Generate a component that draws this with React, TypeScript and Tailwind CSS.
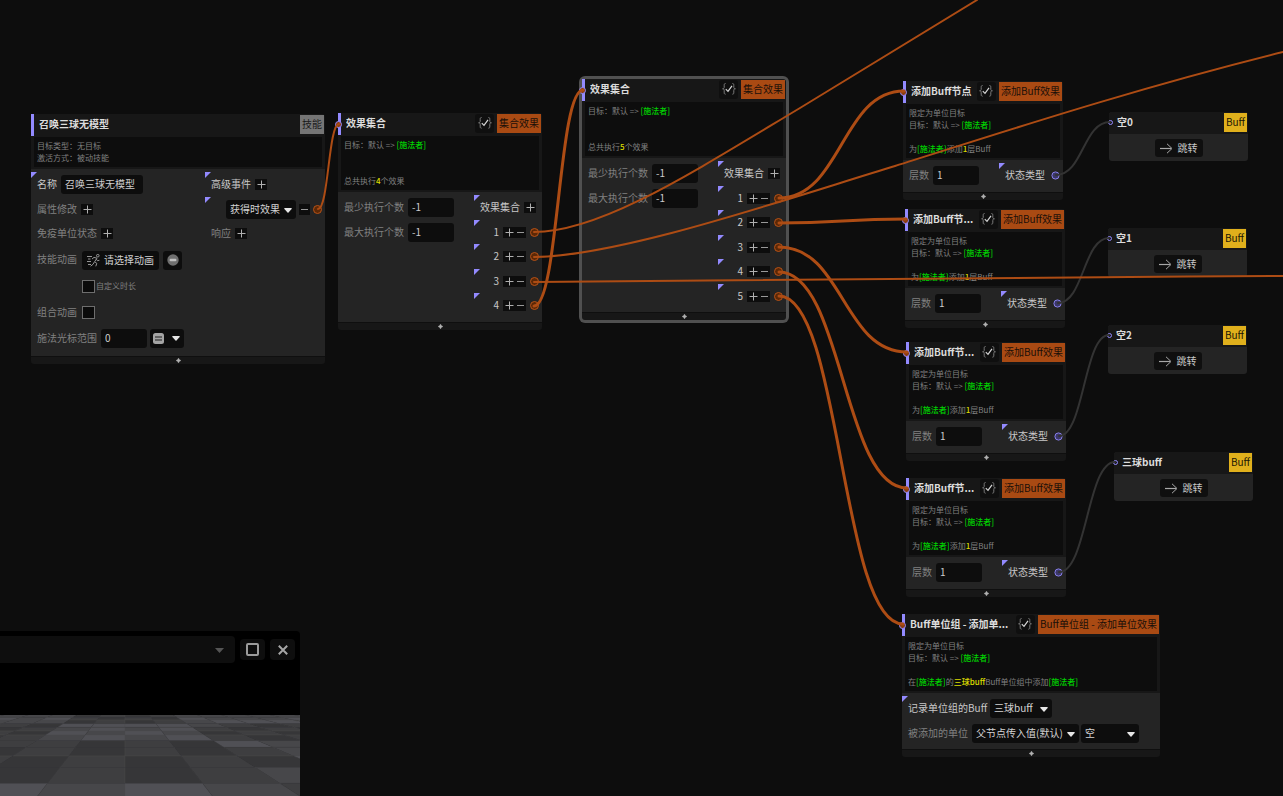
import type { ReactNode } from 'react'
import clsx from 'clsx'

/* ---------- icons ---------- */

function PlusGlyph() {
  return (
    <svg className="block" width="11" height="11" viewBox="0 0 11 11" stroke="#b0b0b0" fill="none">
      <path d="M1.5 5.5h8M5.5 1.5v8" />
    </svg>
  )
}

function MinusGlyph() {
  return (
    <svg className="block" width="11" height="11" viewBox="0 0 11 11" stroke="#989898" fill="none">
      <path d="M2 5.5h7" />
    </svg>
  )
}

function Caret({ className }: { className?: string }) {
  return (
    <svg className={className} width="8" height="5" viewBox="0 0 8 5">
      <path d="M.6 0h6.8q.6.3.2.9L4.5 4.6q-.5.5-1 0L.4.9Q0 .3.6 0z" fill="currentColor" />
    </svg>
  )
}

function BraceCheck() {
  return (
    <svg width="14" height="12" viewBox="0 0 14 12" fill="none">
      <g stroke="#7c7c7c">
        <path d="M3.6.5C2.2.5 2.2 1.2 2.2 2.4v1.9c0 .9-.5 1.5-1.6 1.5 1.1 0 1.6.6 1.6 1.5v1.9c0 1.2 0 2 1.4 2" />
        <path d="M10.4.5c1.4 0 1.4.7 1.4 1.9v1.9c0 .9.5 1.5 1.6 1.5-1.1 0-1.6.6-1.6 1.5v1.9c0 1.2 0 2-1.4 2" />
      </g>
      <path d="M3.8 6.2l2.2 2.2 4-5.6" stroke="#d8d8d8" strokeWidth="1.2" />
    </svg>
  )
}

function RunnerIcon() {
  return (
    <svg width="13" height="13" viewBox="0 0 13 13" fill="none" stroke="#949494">
      <path d="M0 2.5h5M1 5h2.5M0 7.5h4M1 10.5h3" />
      <circle cx="10.8" cy="1.7" r="1.3" />
      <path d="M5 5l2-1.6 3 .8-2.4 3.5 2.2 1.6-1 3M7.4 8L6 10.3l-2.4 1.9M9.4 5.2l1 1.5 2-.4" />
    </svg>
  )
}

/* ---------- small controls ---------- */

function Corner() {
  return (
    <svg className="absolute left-0 top-0" width="6" height="6" viewBox="0 0 6 6">
      <path d="M0 0h6L0 6z" fill="#938aff" />
    </svg>
  )
}

function Text({ children, bright }: { children: ReactNode; bright?: boolean }) {
  return <span className={clsx('pb-0.5', bright && 'text-[#c8c8c8]')}>{children}</span>
}

function Add() {
  return (
    <button aria-label="+" className="flex h-[11px] w-3 items-center justify-center bg-[#0d0d0d]">
      <PlusGlyph />
    </button>
  )
}

function Remove() {
  return (
    <button aria-label="-" className="flex h-[11px] w-[11px] items-center justify-center bg-[#0d0d0d]">
      <MinusGlyph />
    </button>
  )
}

function Field({ value, wide }: { value: string; wide?: boolean }) {
  return (
    <input
      defaultValue={value}
      className={clsx(
        'h-[19px] rounded-[3px] bg-[#0d0d0d] px-1 pb-0.5 text-[10px] text-[#cccccc] outline-none',
        wide ? 'w-[82px]' : 'w-[46px]',
      )}
    />
  )
}

function Picker({ value, label, className }: { value: string; label: string; className: string }) {
  return (
    <span className={clsx('relative block h-[19px] shrink-0', className)}>
      <select
        aria-label={label}
        className="block h-full w-full appearance-none rounded-[3px] bg-[#0d0d0d] pb-0.5 pl-1 text-[10px] text-[#d4d4d4] outline-none"
      >
        <option>{value}</option>
      </select>
      <Caret className="pointer-events-none absolute right-1 top-2 text-[#e6e6e6]" />
    </span>
  )
}

function Tick() {
  return (
    <input
      type="checkbox"
      className="h-[13px] w-[13px] shrink-0 appearance-none border border-[#6e6e6e] bg-[#0b0b0b] checked:bg-[#938aff]"
    />
  )
}

function Port({ kind }: { kind: 'flow' | 'type' }) {
  return (
    <span
      className={clsx(
        'h-[9px] w-[9px] shrink-0 rounded-full border',
        kind === 'flow' ? 'border-[#b65218] bg-[#5c2806]' : 'scale-90 border-[#938aff] bg-[#3b3768]',
      )}
    />
  )
}

/* ---------- node frame ---------- */

type NodeProps = {
  className: string
  title: string
  tag: string
  tagClass?: string
  input?: boolean
  toggle?: boolean
  desc: ReactNode[]
  children: ReactNode
}

function GraphNode({ className, title, tag, tagClass, input = true, toggle = true, desc, children }: NodeProps) {
  return (
    <section className={clsx('absolute rounded-[3px] bg-[#171717]', className)}>
      <header className="relative flex h-[22px] items-start gap-[3px] border-l-[3px] border-[#938aff] pl-[5px] pr-px pt-px">
        {input && (
          <span className="absolute -left-[6px] top-2 h-[7px] w-[7px] rounded-full border border-[#938aff] bg-[#8a3d10]" />
        )}
        <h2 className="min-w-0 flex-1 overflow-hidden whitespace-nowrap text-[10px] font-bold leading-[17px] text-[#dcdcdc]">
          {title}
        </h2>
        {toggle && (
          <button aria-label={title} className="flex h-[19px] w-[19px] shrink-0 items-center justify-center rounded-[3px] bg-[#0f0f0f] pb-px">
            <BraceCheck />
          </button>
        )}
        <span className={clsx('h-[19px] shrink-0 whitespace-nowrap px-0.5 text-[10px] leading-[17px]', tagClass ?? 'bg-[#a94a13] text-[#1b1009]')}>
          {tag}
        </span>
      </header>
      <div className="mx-[3px] mb-0.5 mt-px bg-[#0d0d0d] p-[3px] text-[8px] leading-3 text-[#808080]">
        {desc.map((line, i) => (
          <p key={i} className="h-3 whitespace-nowrap">{line}</p>
        ))}
      </div>
      <div className="flex bg-[#242424] pb-1 pt-[3px] text-[10px] text-[#808080]">{children}</div>
      <footer className="flex h-2 items-center justify-center border-t border-[#0f0f0f]">
        <svg width="5" height="5" viewBox="0 0 5 5">
          <path d="M2.5 0L3.4 1.6 5 2.5 3.4 3.4 2.5 5 1.6 3.4 0 2.5 1.6 1.6z" fill="#b0b0b0" stroke="#b0b0b0" strokeWidth=".3" />
        </svg>
      </footer>
    </section>
  )
}

function Row({ children, marked, className }: { children: ReactNode; marked?: boolean; className?: string }) {
  return (
    <div className={clsx('relative flex items-center whitespace-nowrap odd:h-[25px] even:h-6', className ?? 'gap-1 pl-1.5')}>
      {marked && <Corner />}
      {children}
    </div>
  )
}

const Caster = () => <b className="font-medium text-[#00d400]">[施法者]</b>
const Num = ({ children }: { children: ReactNode }) => <b className="font-medium text-[#dcdc00]">{children}</b>

const TARGET = <>目标：默认 =&gt; <Caster /></>

function EffectSet({ className, count }: { className: string; count: number }) {
  return (
    <GraphNode
      className={clsx('w-[204px]', className)}
      title="效果集合"
      tag="集合效果"
      desc={[TARGET, '', '', <>总共执行<Num>{count}</Num>个效果</>]}
    >
      <div className="flex-1">
        {['最少执行个数', '最大执行个数'].map((name) => (
          <Row key={name}>
            <label className="flex items-center gap-1"><Text>{name}</Text><Field value="-1" /></label>
          </Row>
        ))}
      </div>
      <div className="w-[68px]">
        <Row marked>
          <Text bright>效果集合</Text>
          <Add />
        </Row>
        {Array.from({ length: count }, (_, i) => (
          <Row key={i} marked className="justify-end gap-1 pr-[3px]">
            <Text bright>{i + 1}</Text>
            <span className="flex"><Add /><Remove /></span>
            <Port kind="flow" />
          </Row>
        ))}
      </div>
    </GraphNode>
  )
}

function AddBuff({ className, title = '添加Buff节...' }: { className: string; title?: string }) {
  return (
    <GraphNode
      className={clsx('w-40', className)}
      title={title}
      tag="添加Buff效果"
      desc={['限定为单位目标', TARGET, '', <>为<Caster />添加<Num>1</Num>层Buff</>]}
    >
      <div className="flex-1">
        <Row>
          <label className="flex items-center gap-1"><Text>层数</Text><Field value="1" /></label>
        </Row>
      </div>
      <div className="w-16">
        <Row marked className="justify-between pl-1.5 pr-[3px]">
          <Text bright>状态类型</Text>
          <Port kind="type" />
        </Row>
      </div>
    </GraphNode>
  )
}

function BuffRef({ className, title }: { className: string; title: string }) {
  return (
    <section className={clsx('absolute w-[139px] rounded-[3px] bg-[#242424]', className)}>
      <header className="relative flex h-[22px] items-start rounded-t-[3px] bg-[#171717] pl-2 pr-px pt-px">
        <span className="absolute -left-px top-2 h-[5px] w-[5px] rounded-full border border-[#938aff]" />
        <h2 className="flex-1 text-[10px] font-bold leading-[17px] text-[#dcdcdc]">{title}</h2>
        <span className="h-[19px] bg-[#e0b01c] px-0.5 text-[10px] leading-[17px] text-[#1c1706]">Buff</span>
      </header>
      <div className="flex justify-center pb-1 pt-[5px]">
        <button className="flex h-[18px] items-center gap-[5px] rounded-[3px] bg-[#0f0f0f] px-[5px] text-[10px] text-[#c8c8c8]">
          <svg width="13" height="11" viewBox="0 0 13 11" fill="none" stroke="#a8a8a8">
            <path d="M0 5.5h11" strokeWidth="1.2" />
            <path d="M7 .8l5 4.7-5 4.7" />
          </svg>
          <Text>跳转</Text>
        </button>
      </div>
    </section>
  )
}

/* ---------- skill node ---------- */

function SkillNode() {
  return (
    <GraphNode
      className="left-[31px] top-[114px] w-[294px]"
      title="召唤三球无模型"
      tag="技能"
      tagClass="bg-[#757575] text-[#1c1c1c]"
      input={false}
      toggle={false}
      desc={['目标类型：无目标', '激活方式：被动技能']}
    >
      <div className="w-[174px] pb-0.5">
        <Row marked>
          <label className="flex items-center gap-1"><Text bright>名称</Text><Field value="召唤三球无模型" wide /></label>
        </Row>
        <Row><Text>属性修改</Text><Add /></Row>
        <Row><Text>免疫单位状态</Text><Add /></Row>
        <div className="flex h-7 items-center gap-1 pl-1.5">
          <span className="pb-1">技能动画</span>
          <button className="ml-px flex h-[19px] items-center gap-1 rounded-[3px] bg-[#0d0d0d] px-[5px] text-[#d0d0d0]">
            <RunnerIcon />
            <Text>请选择动画</Text>
          </button>
          <button aria-label="清除" className="flex h-[19px] w-[19px] items-center justify-center rounded-[3px] bg-[#0d0d0d]">
            <svg width="12" height="12" viewBox="0 0 12 12">
              <circle cx="6" cy="6" r="5.7" fill="#6f6f6f" />
              <rect x="2.6" y="4.8" width="6.8" height="2.4" rx="1" fill="#c0c0c0" />
            </svg>
          </button>
        </div>
        <label className="flex h-6 items-center gap-px pl-[51px] text-[8px]"><Tick />自定义时长</label>
        <label className="flex h-7 items-center gap-[5px] pl-1.5"><Text>组合动画</Text><Tick /></label>
        <div className="flex h-6 items-center gap-[3px] pl-1.5">
          <label className="flex items-center gap-1"><Text>施法光标范围</Text><Field value="0" /></label>
          <button aria-label="范围" className="flex h-[19px] w-[34px] items-center justify-between rounded-[3px] bg-[#0d0d0d] pl-[3px] pr-1 text-[#e6e6e6]">
            <svg width="11" height="11" viewBox="0 0 11 11">
              <rect width="11" height="11" rx="2.5" fill="#a4a4a4" />
              <path d="M2 4h7M2 7h7" stroke="#1d1d1d" strokeWidth="1.1" />
            </svg>
            <Caret />
          </button>
        </div>
      </div>
      <div className="flex-1">
        <Row marked><Text bright>高级事件</Text><Add /></Row>
        <Row marked className="justify-end gap-[3px] pr-[3px]">
          <Picker label="高级事件" value="获得时效果" className="w-[70px]" />
          <Remove />
          <Port kind="flow" />
        </Row>
        <Row><Text>响应</Text><Add /></Row>
      </div>
    </GraphNode>
  )
}

function UnitGroupNode() {
  return (
    <GraphNode
      className="left-[902px] top-[614px] w-[258px]"
      title="Buff单位组 - 添加单..."
      tag="Buff单位组 - 添加单位效果"
      desc={[
        '限定为单位目标',
        TARGET,
        '',
        <>在<Caster />的<Num>三球buff</Num>Buff单位组中添加<Caster /></>,
      ]}
    >
      <div className="flex-1">
        <Row marked className="gap-[3px] pl-1.5">
          <Text bright>记录单位组的Buff</Text>
          <Picker label="记录单位组的Buff" value="三球buff" className="w-[62px]" />
        </Row>
        <Row>
          <Text>被添加的单位</Text>
          <span className="flex gap-0.5">
            <Picker label="被添加的单位" value="父节点传入值(默认)" className="w-[107px]" />
            <Picker label="单位" value="空" className="w-[58px]" />
          </span>
        </Row>
      </div>
    </GraphNode>
  )
}

/* ---------- wires ---------- */

// x1, y1, x2, y2
const THICK = [
  [534, 306, 583, 90],
  [779, 198, 904, 91],
  [779, 223, 906, 219],
  [779, 247, 907, 352],
  [779, 272, 907, 488],
  [779, 296, 903, 624],
]
const TYPED = [
  [1056, 175, 1110, 122],
  [1058, 303, 1109, 238],
  [1059, 436, 1109, 335],
  [1059, 572, 1115, 462],
]

function curve([x1, y1, x2, y2]: number[]) {
  const mid = (x1 + x2) / 2
  return `M${x1} ${y1}C${mid} ${y1} ${mid} ${y2} ${x2} ${y2}`
}

function Wires() {
  return (
    <svg className="pointer-events-none absolute inset-0 h-full w-full" fill="none" strokeLinecap="round">
      <g stroke="#333333" strokeWidth="2">
        {TYPED.map((w) => <path key={w[1]} d={curve(w)} />)}
      </g>
      <g stroke="#ad4c14" strokeWidth="3">
        {THICK.map((w) => <path key={w[1]} d={curve(w)} />)}
      </g>
      <g stroke="#ad4c14" strokeWidth="2">
        <path d={curve([318, 209, 339, 124])} />
        <path d="M534 232C600 232 690 174 800 108L977 0" />
        <path d="M534 257C620 256 780 201 895 166C1000 133 1130 90 1283 52" />
        <path d="M534 282C700 282 1000 277 1283 276" />
      </g>
    </svg>
  )
}

/* ---------- preview window ---------- */

const SHADES = ['#363638', '#3e3e40', '#47474a', '#505055']
// far to near; column 6 starts at the vanishing line
const EDGES = [0, 2.3, 5, 8.7, 12.3, 16, 20, 25.7, 32.3, 41, 52.3, 68.3, 86]
const TILES = [
  '222201012222222',
  '232310103222323',
  '222201012333222',
  '101033332101010',
  '010123231010101',
  '101032320101010',
  '010123231010101',
  '232110103222323',
  '323010101232323',
  '232101010322222',
  '101001012101010',
  '010032321010101',
]

function Floor() {
  const x = (k: number, y: number) => 125 + (k * 77.5 * (y + 31)) / 99.3
  return (
    <svg className="block w-full" viewBox="0 0 300 81">
      {TILES.map((row, r) =>
        [...row].map((s, c) => {
          const [top, bottom] = [EDGES[r], EDGES[r + 1]]
          const k = c - 6
          return (
            <path
              key={`${r}-${c}`}
              d={`M${x(k, top)} ${top}H${x(k + 1, top)}L${x(k + 1, bottom)} ${bottom}H${x(k, bottom)}z`}
              fill={SHADES[Number(s)]}
              stroke="#4a4a4d"
              strokeWidth=".3"
            />
          )
        }),
      )}
    </svg>
  )
}

function Preview() {
  return (
    <aside className="absolute bottom-0 left-0 w-[300px] rounded-tr-[4px] bg-black">
      <div className="flex h-[84px] items-start gap-[5px] pr-[5px] pt-[5px]">
        <button aria-label="展开" className="flex h-[27px] flex-1 items-center justify-end rounded-r-[4px] bg-[#0e0e0e] pr-[11px] pt-0.5 text-[#555555]">
          <svg width="9" height="5" viewBox="0 0 9 5"><path d="M0 0h9L4.5 5z" fill="currentColor" /></svg>
        </button>
        <button aria-label="最大化" className="mt-[3px] flex h-[21px] w-[25px] items-center justify-center rounded-[4px] bg-[#0e0e0e]">
          <span className="h-[13px] w-[13px] rounded-[2px] border-2 border-[#9c9c9c]" />
        </button>
        <button aria-label="关闭" className="mt-[3px] flex h-[21px] w-[25px] items-center justify-center rounded-[4px] bg-[#0e0e0e]">
          <svg width="10" height="10" viewBox="0 0 10 10" stroke="#a6a6a6" strokeWidth="2"><path d="M.8.8l8.4 8.4M9.2.8L.8 9.2" /></svg>
        </button>
      </div>
      <Floor />
    </aside>
  )
}

export default function App() {
  return (
    <main className="relative min-h-screen overflow-hidden bg-[#0d0d0d] font-['Noto_Sans_CJK_SC',sans-serif]">
      <SkillNode />
      <EffectSet className="left-[338px] top-[113px]" count={4} />
      <EffectSet className="left-[582px] top-[79px] ring-3 ring-[#505050]" count={5} />

      <AddBuff className="left-[903px] top-[81px]" title="添加Buff节点" />
      <AddBuff className="left-[905px] top-[209px]" />
      <AddBuff className="left-[906px] top-[342px]" />
      <AddBuff className="left-[906px] top-[478px]" />
      <UnitGroupNode />

      <BuffRef className="left-[1109px] top-[112px]" title="空0" />
      <BuffRef className="left-[1108px] top-[228px]" title="空1" />
      <BuffRef className="left-[1108px] top-[325px]" title="空2" />
      <BuffRef className="left-[1114px] top-[452px]" title="三球buff" />

      <Wires />
      <Preview />
    </main>
  )
}
